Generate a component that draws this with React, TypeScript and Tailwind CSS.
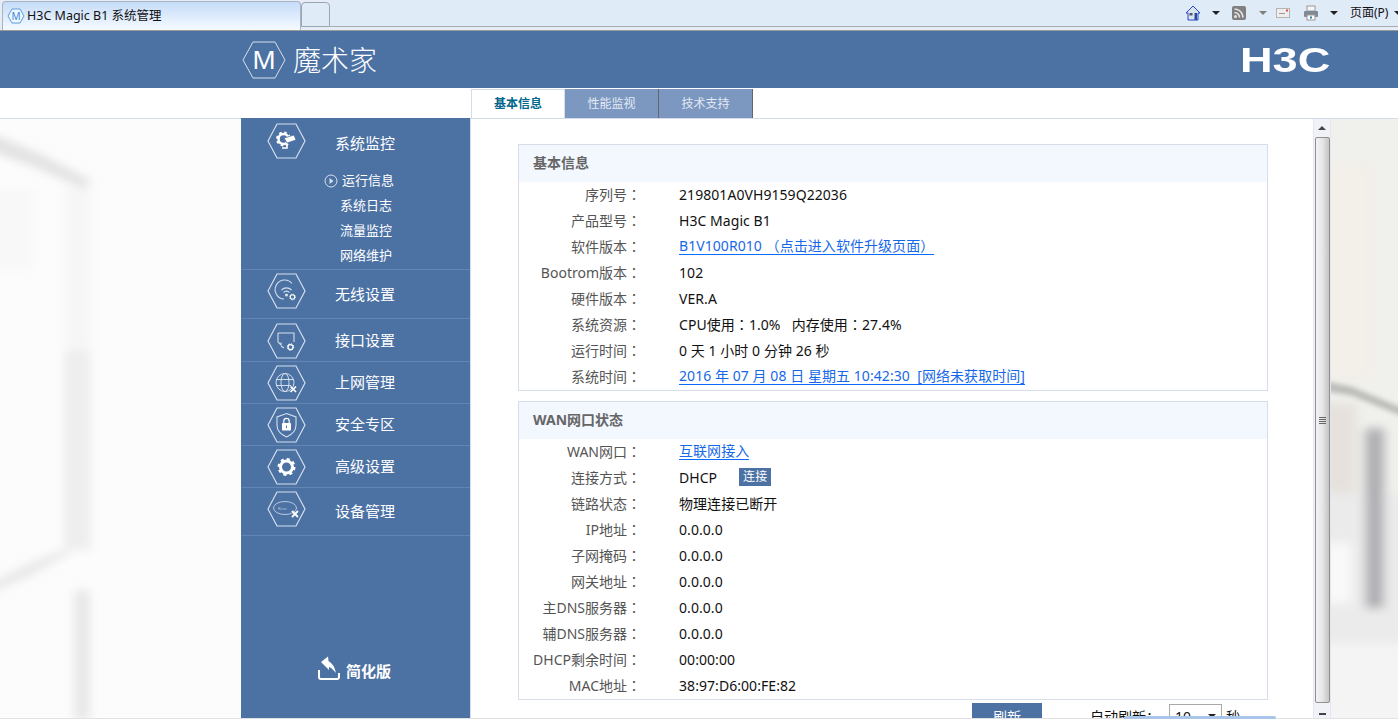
import type { ReactNode } from 'react';

const HEX = '1,18 10,1 29,1 38,18 29,35 10,35';

function Gear({ x, y, r, color = '#ffffff' }: { x: number; y: number; r: number; color?: string }) {
  const teethR = r * 1.3;
  const dash = (2 * Math.PI * teethR) / 16;
  return (
    <g fill="none" stroke={color}>
      <circle cx={x} cy={y} r={r} strokeWidth={r * 0.5} />
      <circle cx={x} cy={y} r={teethR} strokeWidth={r * 0.4} strokeDasharray={`${dash} ${dash}`} />
    </g>
  );
}

function HexIcon({ children, className = '' }: { children?: ReactNode; className?: string }) {
  return (
    <svg viewBox="0 0 39 36" className={`w-[39px] h-[36px] shrink-0 ${className}`}>
      <polygon points={HEX} fill="none" stroke="#d5dfec" strokeWidth="1.2" />
      {children}
    </svg>
  );
}

const menu: { label: string; h: string; hex: string; icon: ReactNode }[] = [
  {
    label: '无线设置',
    h: 'h-[49px]',
    hex: 'mb-[6px]',
    icon: (
      <g fill="none" stroke="#d5dfec" strokeWidth="1.1">
        <path d="M25 10.5 A 9.5 9.5 0 1 0 17 26" />
        <path d="M14.5 17 A 7 7 0 0 1 24.5 17" />
        <path d="M16.5 19.5 A 4 4 0 0 1 22.5 19.5" />
        <circle cx="19.5" cy="22" r="1" fill="#d5dfec" />
        <Gear x={25.5} y={24} r={2.2} color="#ffffff" />
      </g>
    ),
  },
  {
    label: '接口设置',
    h: 'h-[43px]',
    hex: 'mt-[1px]',
    icon: (
      <g>
        <path d="M11 10 H27 V19 M11 10 V19 L14 22 V19.5 M14 23 L17 25" fill="none" stroke="#d5dfec" strokeWidth="1.1" />
        <Gear x={23.5} y={24} r={2.5} />
      </g>
    ),
  },
  {
    label: '上网管理',
    h: 'h-[42px]',
    hex: '',
    icon: (
      <g fill="none" stroke="#d5dfec" strokeWidth="1">
        <circle cx="18" cy="17.5" r="9" />
        <ellipse cx="18" cy="17.5" rx="4" ry="9" />
        <path d="M9.5 14.5 H26.5 M9.5 20.5 H24" />
        <path d="M23.5 21.5 L29 27 M29 21.5 L23.5 27" stroke="#ffffff" strokeWidth="1.7" />
      </g>
    ),
  },
  {
    label: '安全专区',
    h: 'h-[42px]',
    hex: '',
    icon: (
      <g>
        <path d="M19.5 6.5 L29 10 V18 C29 24 24 28 19.5 30 C15 28 10 24 10 18 V10 Z" fill="none" stroke="#d5dfec" strokeWidth="1.1" />
        <rect x="15" y="16" width="9" height="7.5" rx="0.8" fill="#ffffff" />
        <path d="M16.8 16 V14 A 2.7 2.7 0 0 1 22.2 14 V16" fill="none" stroke="#ffffff" strokeWidth="1.2" />
        <rect x="19" y="18.5" width="1" height="2.5" fill="#4c72a4" />
      </g>
    ),
  },
  {
    label: '高级设置',
    h: 'h-[42px]',
    hex: '',
    icon: <Gear x={19.5} y={18} r={6} />,
  },
  {
    label: '设备管理',
    h: 'h-[48px]',
    hex: 'mb-[5px]',
    icon: (
      <g>
        <ellipse cx="18" cy="17" rx="11.5" ry="6.5" fill="none" stroke="#b8c8dd" strokeWidth="1" />
        <text x="11" y="18.5" fontSize="4" fill="#b8c8dd">Rosc</text>
        <path d="M25 20 L31 26 M31 20 L25 26" stroke="#ffffff" strokeWidth="1.8" />
      </g>
    ),
  },
];

// the TC face centres full-width punctuation, which is how the page's font sets it
function Punct({ children }: { children: string }) {
  return <span className="font-['Noto_Sans_CJK_TC',sans-serif]">{children}</span>;
}

const basicRows: { label: string; value: ReactNode }[] = [
  { label: '序列号', value: '219801A0VH9159Q22036' },
  { label: '产品型号', value: 'H3C Magic B1' },
  {
    label: '软件版本',
    value: (
      <Link>
        B1V100R010 <Punct>（</Punct>点击进入软件升级页面<Punct>）</Punct>
      </Link>
    ),
  },
  { label: 'Bootrom版本', value: '102' },
  { label: '硬件版本', value: 'VER.A' },
  {
    label: '系统资源',
    value: (
      <span className="whitespace-pre">
        CPU使用<Punct>：</Punct>1.0%   内存使用<Punct>：</Punct>27.4%
      </span>
    ),
  },
  { label: '运行时间', value: '0 天 1 小时 0 分钟 26 秒' },
  { label: '系统时间', value: <Link>2016 年 07 月 08 日 星期五 10:42:30  [网络未获取时间]</Link> },
];

const wanRows: { label: string; value: ReactNode }[] = [
  { label: 'WAN网口', value: <Link>互联网接入</Link> },
  {
    label: '连接方式',
    value: (
      <span className="flex items-center">
        DHCP
        <span className="ml-[22px] w-[32px] h-[18px] bg-[#4c72a4] text-white text-[12px] leading-[18px] text-center">连接</span>
      </span>
    ),
  },
  { label: '链路状态', value: '物理连接已断开' },
  { label: 'IP地址', value: '0.0.0.0' },
  { label: '子网掩码', value: '0.0.0.0' },
  { label: '网关地址', value: '0.0.0.0' },
  { label: '主DNS服务器', value: '0.0.0.0' },
  { label: '辅DNS服务器', value: '0.0.0.0' },
  { label: 'DHCP剩余时间', value: '00:00:00' },
  { label: 'MAC地址', value: '38:97:D6:00:FE:82' },
];

function Link({ children }: { children: ReactNode }) {
  return <span className="whitespace-pre text-[#1668e8] border-b border-[#0a6cff] leading-[17px]">{children}</span>;
}

function Card({ title, rows, className = '' }: { title: string; rows: { label: string; value: ReactNode }[]; className?: string }) {
  return (
    <div className={`w-[750px] border border-[#d8dee9] ${className}`}>
      <div className="h-[37px] bg-[#f3f7fe] pl-[14px] pb-[2px] flex items-center text-[14px] font-bold text-[#666666]">{title}</div>
      {rows.map((r) => (
        <div key={r.label} className="h-[26px] pb-[2px] flex items-center text-[14px]">
          <div className="w-[122px] text-right text-[#555555] whitespace-nowrap">
            {r.label}
            <Punct>：</Punct>
          </div>
          <div className="ml-[38px] text-[#111111] flex items-center tracking-[0.06px]">{r.value}</div>
        </div>
      ))}
    </div>
  );
}

function Arrow({ className = '' }: { className?: string }) {
  return <span className={`w-0 h-0 border-x-[4px] border-x-transparent border-t-[4px] ${className}`} />;
}

function BrowserBar() {
  return (
    <div className="h-[31px] shrink-0 bg-[#e6edf6] border-b border-[#9a9a9a] flex items-start">
      <div className="ml-[2px] mt-[1px] w-[299px] h-[29px] shrink-0 rounded-t-[4px] border border-b-0 border-[#a9b4c2] bg-gradient-to-b from-[#c5dcf9] to-[#f6faff] flex items-center pl-[4px]">
        <svg viewBox="0 0 18 16" className="w-[18px] h-[16px] shrink-0">
          <polygon points="1,8 5,1 13,1 17,8 13,15 5,15" fill="#f2f8ff" stroke="#5b9be0" strokeWidth="1" />
          <text x="9" y="12" textAnchor="middle" fontSize="10" fill="#3b86dc">M</text>
        </svg>
        <span className="ml-[2px] text-[12.5px] text-[#111111] whitespace-nowrap">H3C Magic B1 系统管理</span>
      </div>
      <div className="mt-[2px] w-[29px] h-[25px] shrink-0 rounded-t-[4px] border border-[#9aa5b3] bg-[#e0ebf8]" />
      <div className="flex-1 h-[27px] bg-[#e0ebf8] border-b border-[#a8adb5] flex items-center relative">
        <div className="ml-[855px] flex items-center">
          <svg viewBox="0 0 16 16" className="w-[16px] h-[16px]">
            <path d="M8 1 L1 8 H3 V15 H13 V8 H15 Z" fill="#dbe3ee" stroke="#2947c9" strokeWidth="1" />
            <rect x="9.5" y="8" width="2.5" height="7" fill="#1c4f9c" />
            <rect x="4.5" y="8" width="3" height="2.5" fill="#556" />
          </svg>
          <Arrow className="ml-[11px] border-t-[#222222]" />
          <svg viewBox="0 0 14 14" className="ml-[12px] w-[14px] h-[14px]">
            <rect width="14" height="14" rx="2" fill="#808080" />
            <circle cx="3.5" cy="10.5" r="1.5" fill="#e5e5e5" />
            <path d="M2.5 6.5 A 5 5 0 0 1 7.5 11.5 M2.5 3 A 8.5 8.5 0 0 1 11 11.5" fill="none" stroke="#e5e5e5" strokeWidth="1.6" />
          </svg>
          <Arrow className="ml-[13px] border-t-[#808080]" />
          <svg viewBox="0 0 14 10" className="ml-[9px] w-[14px] h-[10px]">
            <rect x="0.5" y="0.5" width="13" height="9" fill="#eeeeee" stroke="#b5b5b5" />
            <rect x="3" y="5" width="6" height="1" fill="#999999" />
            <rect x="10" y="1.5" width="2" height="2" fill="#e04848" />
          </svg>
          <svg viewBox="0 0 16 16" className="ml-[13px] w-[16px] h-[16px]">
            <rect x="4" y="1" width="8" height="5" fill="#f5f5f5" stroke="#999999" />
            <rect x="1" y="6" width="14" height="6" rx="1" fill="#7f8a94" />
            <rect x="4" y="10" width="8" height="5" fill="#ffffff" stroke="#999999" />
            <rect x="7" y="11.5" width="2" height="2" fill="#2c7fa8" />
          </svg>
          <Arrow className="ml-[11px] border-t-[#222222]" />
          <span className="ml-[12px] text-[12px] text-[#111111] whitespace-nowrap">页面(P)</span>
          <Arrow className="ml-[6px] border-t-[#222222]" />
        </div>
      </div>
    </div>
  );
}

function Header() {
  return (
    <div className="h-[57px] shrink-0 bg-[#4c72a4] flex items-center">
      <div className="ml-[242px] flex items-center">
        <svg viewBox="0 0 44 38" className="w-[44px] h-[38px] shrink-0">
          <polygon points="1,19 11,1 33,1 43,19 33,37 11,37" fill="none" stroke="#d5dfec" strokeWidth="1" />
          <text x="22" y="28" textAnchor="middle" fontSize="26" fill="#ffffff">M</text>
        </svg>
        <span className="ml-[7px] text-[28px] leading-none font-light text-white whitespace-nowrap">魔术家</span>
      </div>
      <span className="ml-[863px] w-[70px] origin-left scale-x-[1.29] font-['Liberation_Sans',sans-serif] text-[35px] leading-none font-bold text-white">H3C</span>
    </div>
  );
}

function SideNav() {
  return (
    <div className="relative -mt-px w-[229px] shrink-0 bg-[#4c72a4] text-white flex flex-col">
      <div className="border-b border-[#6285b3]">
        <div className="h-[51px] flex items-center pl-[26px]">
          <HexIcon className="mb-[6px]">
            <Gear x={16.5} y={16} r={5} />
            <path d="M17 15 L27 12 L29 17 L20 20 Z" fill="#ffffff" stroke="#4c72a4" strokeWidth="0.8" />
            <path d="M20 21 V25 H15" fill="none" stroke="#ffffff" strokeWidth="1.6" />
          </HexIcon>
          <span className="ml-[29px] text-[15px] mb-[1px]">系统监控</span>
        </div>
        <div className="h-[25px] pb-[2px] flex items-center pl-[83px] text-[13px]">
          <svg viewBox="0 0 14 14" className="w-[14px] h-[14px] shrink-0">
            <circle cx="7" cy="7" r="6" fill="none" stroke="#d5dfec" strokeWidth="1" />
            <path d="M5.5 4 L9.5 7 L5.5 10 Z" fill="#d5dfec" />
          </svg>
          <span className="ml-[4px]">运行信息</span>
        </div>
        <div className="h-[25px] pb-[2px] flex items-center pl-[99px] text-[13px]">系统日志</div>
        <div className="h-[25px] pb-[2px] flex items-center pl-[99px] text-[13px]">流量监控</div>
        <div className="h-[25px] pb-[2px] flex items-center pl-[99px] text-[13px]">网络维护</div>
      </div>
      {menu.map((m) => (
        <div key={m.label} className={`${m.h} box-border border-b border-[#6285b3] flex items-center pl-[26px]`}>
          <HexIcon className={m.hex}>{m.icon}</HexIcon>
          <span className="ml-[29px] text-[15px]">{m.label}</span>
        </div>
      ))}
      <div className="mt-[120px] flex items-center pl-[77px]">
        <svg viewBox="0 0 22 24" className="w-[22px] h-[24px] shrink-0 mb-[7px]">
          <path d="M1 14 V21 Q1 23 3 23 H19 Q21 23 21 21 V17" fill="none" stroke="#ffffff" strokeWidth="2" />
          <path d="M3 6 L10 0.5 L10.5 5 Q16 8 18 17 Q13 11 11 11 L11 14 Z" fill="#ffffff" />
        </svg>
        <span className="ml-[6px] text-[15px] font-bold">简化版</span>
      </div>
    </div>
  );
}

function ScrollTrack() {
  return (
    <div className="w-[18px] shrink-0 bg-[#f0f2f8] border-x border-[#e3e7f1] flex flex-col items-center">
      <div className="h-[18px] w-full flex items-center justify-center">
        <span className="w-0 h-0 border-x-[4px] border-x-transparent border-b-[4px] border-b-[#444444]" />
      </div>
      <div className="w-[15px] h-[566px] rounded-[2px] border border-[#8f8f8f] bg-gradient-to-r from-[#f3f3f3] via-[#e6e6e6] to-[#c4c4c4] flex flex-col items-center justify-center gap-[1px]">
        <span className="w-[7px] h-px bg-[#666666]" />
        <span className="w-[7px] h-px bg-[#666666]" />
        <span className="w-[7px] h-px bg-[#666666]" />
        <span className="w-[7px] h-px bg-[#666666]" />
      </div>
      <div className="mt-[10px] w-[7px] h-[2px] bg-[#444444]" />
    </div>
  );
}

function Content() {
  return (
    <div className="w-[843px] shrink-0 bg-white border-l border-[#d5dbe8] pl-[47px] pt-[25px] overflow-hidden text-[14px]">
      <Card title="基本信息" rows={basicRows} />
      <Card title="WAN网口状态" rows={wanRows} className="mt-[10px]" />
      <div className="mt-[3px] ml-[454px] flex items-start">
        <div className="w-[70px] h-[26px] bg-[#4c72a4] text-white flex items-center justify-center shrink-0">刷新</div>
        <div className="ml-[48px] flex items-center h-[26px] whitespace-nowrap text-[#111111]">
          自动刷新：
          <span className="ml-[9px] w-[53px] h-[24px] border border-[#aaaaaa] flex items-center justify-between px-[5px]">
            10
            <Arrow className="border-t-[#222222]" />
          </span>
          <span className="ml-[4px]">秒</span>
        </div>
      </div>
    </div>
  );
}

export default function App() {
  return (
    <div className="relative w-[1398px] h-[719px] overflow-hidden bg-white flex flex-col font-['Noto_Sans','Noto_Sans_CJK_SC',sans-serif]">
      <BrowserBar />
      <Header />
      <div className="h-[31px] shrink-0 pl-[471px] pt-[1px] flex items-start border-b border-[#d5dbe8] text-[12px]">
        <div className="w-[94px] h-[29px] border-x border-t border-[#d5dbe8] bg-white font-bold text-[#00668c] flex items-center justify-center">基本信息</div>
        <div className="w-[94px] h-[29px] bg-[#7c98c1] border-r border-[#666666] text-[#e3e9f3] flex items-center justify-center">性能监视</div>
        <div className="w-[94px] h-[29px] bg-[#7c98c1] border-r border-[#666666] text-[#e3e9f3] flex items-center justify-center">技术支持</div>
      </div>
      <div className="flex-1 min-h-0 flex">
        <div className="w-[241px] shrink-0 bg-[#fcfcfc]">
          <svg viewBox="0 0 241 600" preserveAspectRatio="none" className="w-full h-full block">
            <defs>
              <filter id="leftBlur"><feGaussianBlur stdDeviation="5" /></filter>
            </defs>
            <g filter="url(#leftBlur)">
              <polygon points="-10,15 0,18 40,35 92,62 85,70 35,48 -10,32" fill="#e2e2e2" />
              <rect x="65" y="68" width="26" height="165" fill="#f6f6f6" />
              <rect x="64" y="232" width="27" height="200" fill="#eeeeee" />
              <polygon points="-10,465 30,445 68,430 68,436 30,458 -10,475" fill="#e8e8e8" />
              <rect x="74" y="472" width="16" height="130" fill="#e8e8e8" />
              <rect x="-10" y="70" width="45" height="80" fill="#f8f8f8" />
            </g>
          </svg>
        </div>
        <SideNav />
        <Content />
        <ScrollTrack />
        <div className="flex-1 bg-[#f0f0ec]">
          <svg viewBox="0 0 66 600" preserveAspectRatio="none" className="w-full h-full block">
            <defs>
              <filter id="rightBlur"><feGaussianBlur stdDeviation="5" /></filter>
              <filter id="rightBeam"><feGaussianBlur stdDeviation="2.5" /></filter>
            </defs>
            <g filter="url(#rightBlur)">
              <rect x="-10" y="45" width="50" height="215" fill="#f3efe9" />
              <rect x="-10" y="285" width="35" height="100" fill="#e6e1dc" />
              <rect x="-10" y="375" width="90" height="240" fill="#ebebeb" />
              <rect x="-6" y="425" width="26" height="60" fill="#f9f9f9" />
              <rect x="34" y="310" width="18" height="180" fill="#aeaeb2" />
              <rect x="-10" y="525" width="90" height="90" fill="#f4f4f4" />
            </g>
            <polygon points="-10,262 20,268 76,292 76,300 20,277 -10,272" fill="#bcbcb8" filter="url(#rightBeam)" />
          </svg>
        </div>
      </div>
      <div className="h-px shrink-0 bg-[#e2e2e2]" />
      {/* status popup peeking in at the bottom edge */}
      <div className="absolute left-[1124px] bottom-0 w-[152px] h-[3px] rounded-t-[2px] bg-[#a9c6ea]" />
    </div>
  );
}
